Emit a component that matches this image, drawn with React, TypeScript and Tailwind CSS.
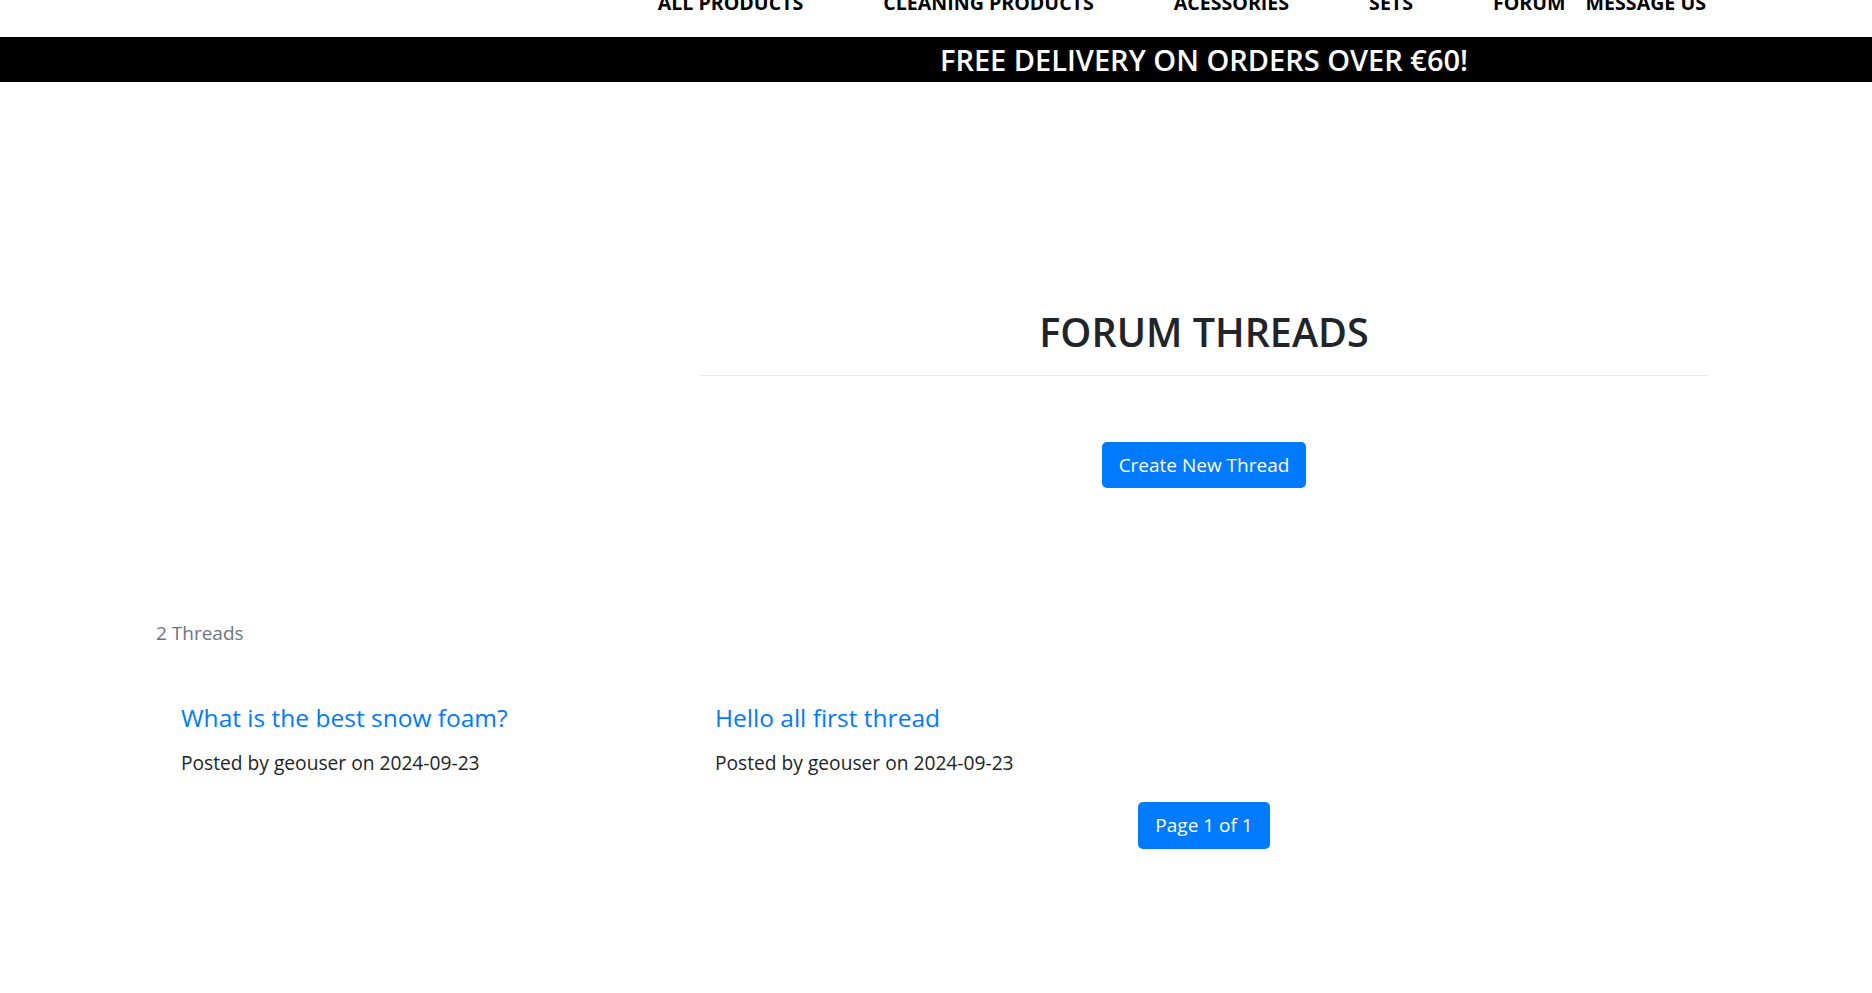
import React from "react";

const navLinks = [
  { label: "ALL PRODUCTS", gap: "ml-0" },
  { label: "CLEANING PRODUCTS", gap: "ml-[80px]" },
  { label: "ACESSORIES", gap: "ml-[80px]" },
  { label: "SETS", gap: "ml-[80px]" },
  { label: "FORUM", gap: "ml-[80px]" },
  { label: "MESSAGE US", gap: "ml-[20px]" },
];

const threads = [
  { title: "What is the best snow foam?", author: "geouser", date: "2024-09-23" },
  { title: "Hello all first thread", author: "geouser", date: "2024-09-23" },
];

const App: React.FC = () => {
  return (
    <div className="min-h-screen bg-white font-['Open_Sans',sans-serif] text-[#212529]">
      {/* Top nav (scrolled slightly, tops cut off) */}
      <nav className="h-[37px] overflow-hidden flex justify-end pr-[166px]">
        <ul className="flex items-start -mt-[9px]">
          {navLinks.map((link) => (
            <li key={link.label} className={link.gap}>
              <a href="#" className="text-[19.6px] font-bold text-black leading-[24px]">
                {link.label}
              </a>
            </li>
          ))}
        </ul>
      </nav>

      {/* Delivery banner */}
      <div className="bg-black h-[45px] flex items-center pl-[701px] pr-[165px]">
        <p className="w-full text-center text-white text-[29px] font-semibold leading-none">
          FREE DELIVERY ON ORDERS OVER €60!
        </p>
      </div>

      {/* Header */}
      <section className="pl-[701px] pr-[165px] pt-[226px]">
        <h1 className="text-center text-[39.5px] font-semibold leading-[48px]">FORUM THREADS</h1>
        <hr className="mt-[19px] border-t border-[rgba(0,0,0,0.1)]" />
        <div className="flex justify-center mt-[66px]">
          <button className="bg-[#007bff] text-white text-[19px] rounded-[5px] px-[17px] h-[46px]">
            Create New Thread
          </button>
        </div>
      </section>

      {/* Threads */}
      <section className="pl-[156px] pt-[131px]">
        <p className="text-[#6c757d] text-[19px] leading-[28px]">2 Threads</p>
        <div className="grid grid-cols-[534px_534px] pl-[25px] mt-[54px]">
          {threads.map((t) => (
            <div key={t.title}>
              <a href="#" className="block text-[#007bff] text-[24.5px] leading-[34px]">
                {t.title}
              </a>
              <p className="text-[19.2px] leading-[28px] mt-[14px]">
                Posted by {t.author} on {t.date}
              </p>
            </div>
          ))}
        </div>
      </section>

      {/* Pagination */}
      <div className="pl-[701px] pr-[165px] flex justify-center mt-[25px]">
        <span className="bg-[#007bff] text-white text-[19px] rounded-[5px] px-[17px] h-[47px] flex items-center">
          Page 1 of 1
        </span>
      </div>
    </div>
  );
};

export default App;
